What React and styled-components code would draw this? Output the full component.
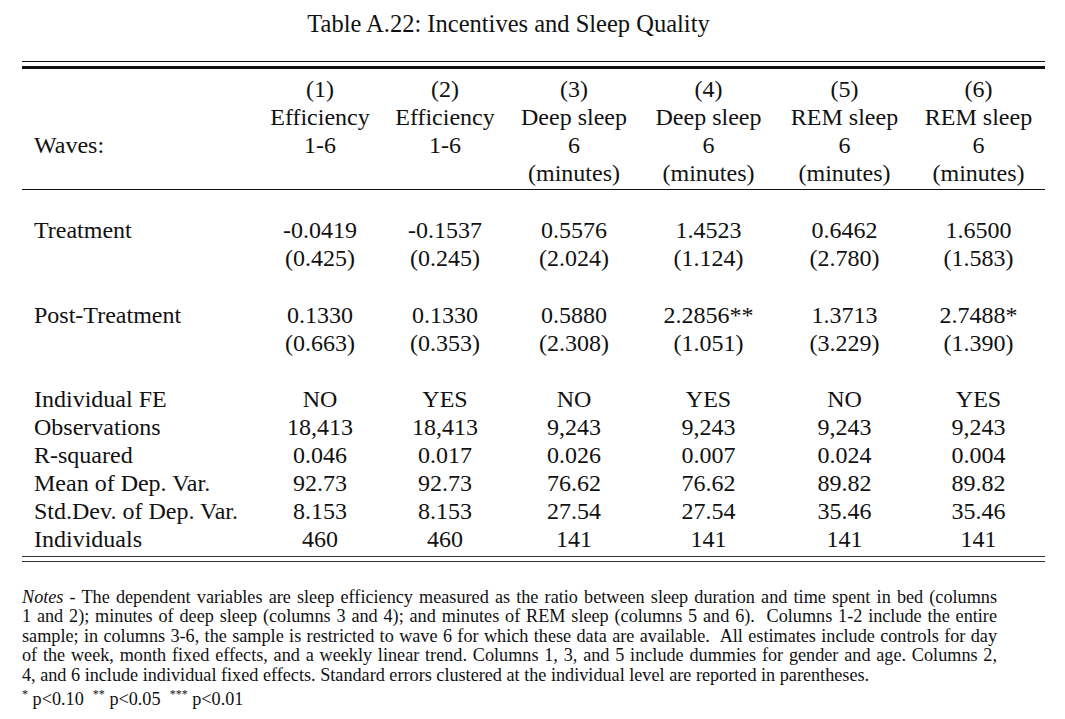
import styled, { createGlobalStyle } from 'styled-components';

const Global = createGlobalStyle`
  body {
    margin: 0;
    background: #fff;
    color: #111;
    font-family: "Liberation Serif", "Times New Roman", serif;
  }
`;

const Page = styled.div`
  width: 1065px;
  padding: 0 20px 0 22px;
  box-sizing: border-box;
`;

const Title = styled.div`
  height: 48px;
  line-height: 48px;
  text-align: center;
  font-size: 24.5px;
  padding-right: 50px;
`;

const Rule = styled.div`
  height: ${p => p.$h || 1}px;
  background: ${p => p.$c || '#111'};
  margin-top: ${p => p.$mt || 0}px;
`;

const Grid = styled.div`
  display: grid;
  grid-template-columns: 236px 124px 126px 132px 137px 135px 133px;
  font-size: 24px;
  line-height: 28px;
  padding-top: ${p => p.$pt || 0}px;
  padding-bottom: ${p => p.$pb || 0}px;
`;

const Label = styled.div`
  padding-left: 12px;
  white-space: nowrap;
`;

const Cell = styled.div`
  text-align: center;
  white-space: nowrap;
`;

const Spacer = styled.div`
  grid-column: 1 / -1;
  height: ${p => p.$h}px;
`;

const Notes = styled.div`
  margin-top: 26px;
  width: 975px;
  font-size: 18.2px;
  line-height: 19.4px;
`;

const NoteLine = styled.div`
  white-space: nowrap;
  text-align: ${p => (p.$last ? 'left' : 'justify')};
  text-align-last: ${p => (p.$last ? 'left' : 'justify')};
`;

const Star = styled.sup`
  font-size: 12px;
`;

const header = [
  ['', '(1)', '(2)', '(3)', '(4)', '(5)', '(6)'],
  ['', 'Efficiency', 'Efficiency', 'Deep sleep', 'Deep sleep', 'REM sleep', 'REM sleep'],
  ['Waves:', '1-6', '1-6', '6', '6', '6', '6'],
  ['', '', '', '(minutes)', '(minutes)', '(minutes)', '(minutes)'],
];

const coefs = [
  [
    ['Treatment', '-0.0419', '-0.1537', '0.5576', '1.4523', '0.6462', '1.6500'],
    ['', '(0.425)', '(0.245)', '(2.024)', '(1.124)', '(2.780)', '(1.583)'],
  ],
  [
    ['Post-Treatment', '0.1330', '0.1330', '0.5880', '2.2856**', '1.3713', '2.7488*'],
    ['', '(0.663)', '(0.353)', '(2.308)', '(1.051)', '(3.229)', '(1.390)'],
  ],
];

const stats = [
  ['Individual FE', 'NO', 'YES', 'NO', 'YES', 'NO', 'YES'],
  ['Observations', '18,413', '18,413', '9,243', '9,243', '9,243', '9,243'],
  ['R-squared', '0.046', '0.017', '0.026', '0.007', '0.024', '0.004'],
  ['Mean of Dep. Var.', '92.73', '92.73', '76.62', '76.62', '89.82', '89.82'],
  ['Std.Dev. of Dep. Var.', '8.153', '8.153', '27.54', '27.54', '35.46', '35.46'],
  ['Individuals', '460', '460', '141', '141', '141', '141'],
];

function Row({ cells }) {
  return (
    <>
      <Label>{cells[0]}</Label>
      {cells.slice(1).map((c, i) => (
        <Cell key={i}>{c}</Cell>
      ))}
    </>
  );
}

export default function App() {
  return (
    <Page>
      <Global />
      <Title>Table A.22: Incentives and Sleep Quality</Title>
      <Rule $mt={13} />
      <Rule $h={3} $mt={4} />
      <Grid $pt={6} $pb={2}>
        {header.map((r, i) => <Row key={i} cells={r} />)}
      </Grid>
      <Rule />
      <Grid $pt={26} $pb={3}>
        {coefs[0].map((r, i) => <Row key={'a' + i} cells={r} />)}
        <Spacer $h={29} />
        {coefs[1].map((r, i) => <Row key={'b' + i} cells={r} />)}
        <Spacer $h={28} />
        {stats.map((r, i) => <Row key={'c' + i} cells={r} />)}
      </Grid>
      <Rule $c="#333" />
      <Rule $c="#333" $mt={4} />
      <Notes>
        <NoteLine>
          <i>Notes</i> - The dependent variables are sleep efficiency measured as the ratio between sleep duration and time spent in bed (columns
        </NoteLine>
        <NoteLine>
          1 and 2); minutes of deep sleep (columns 3 and 4); and minutes of REM sleep (columns 5 and 6).&nbsp; Columns 1-2 include the entire
        </NoteLine>
        <NoteLine>
          sample; in columns 3-6, the sample is restricted to wave 6 for which these data are available.&nbsp; All estimates include controls for day
        </NoteLine>
        <NoteLine>
          of the week, month fixed effects, and a weekly linear trend. Columns 1, 3, and 5 include dummies for gender and age. Columns 2,
        </NoteLine>
        <NoteLine $last>
          4, and 6 include individual fixed effects. Standard errors clustered at the individual level are reported in parentheses.
        </NoteLine>
        <NoteLine $last>
          <Star>*</Star> p&lt;0.10&nbsp; <Star>**</Star> p&lt;0.05&nbsp; <Star>***</Star> p&lt;0.01
        </NoteLine>
      </Notes>
    </Page>
  );
}
